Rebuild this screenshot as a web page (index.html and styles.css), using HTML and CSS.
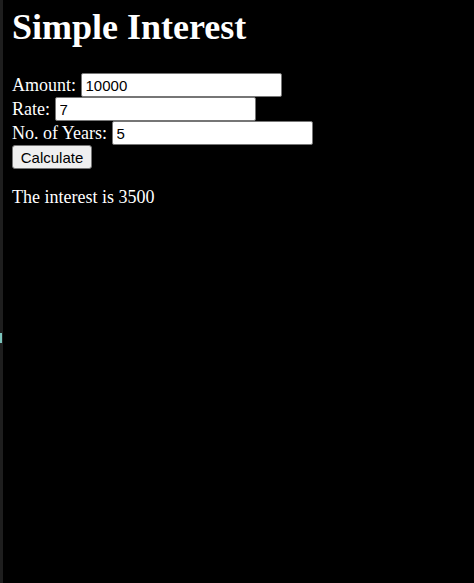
FILE: index.html
```html
<!DOCTYPE html>
<html>
<head>
<meta charset="utf-8">
<title>Simple Interest</title>
<link rel="stylesheet" href="styles.css">
</head>
<body>
<div class="edge"><span class="edge-mark"></span></div>
<main class="page">
  <h1 class="title">Simple Interest</h1>
  <form class="form">
    <div class="row"><label class="label">Amount:</label> <input class="field" type="text" value="10000"></div>
    <div class="row"><label class="label">Rate:</label> <input class="field" type="text" value="7"></div>
    <div class="row"><label class="label">No. of Years:</label> <input class="field" type="text" value="5"></div>
    <div class="row"><button class="btn" type="button">Calculate</button></div>
  </form>
  <p class="result">The interest is 3500</p>
</main>
</body>
</html>
```
FILE: styles.css
```css
html, body {
  margin: 0;
  padding: 0;
  background: #000;
  height: 100%;
}
body {
  display: flex;
  color: #fff;
  font-family: "Liberation Serif", "Times New Roman", serif;
  font-size: 18px;
}
.edge {
  width: 3px;
  flex: none;
  background: #1e1e1e;
  position: relative;
}
.edge-mark {
  position: absolute;
  left: 0;
  top: 333px;
  width: 2px;
  height: 10px;
  background: #7cc4bc;
}
.page {
  padding: 7px 9px 0 9px;
}
.title {
  font-size: 36px;
  font-weight: bold;
  margin: 0 0 25px 0;
  line-height: 41px;
}
.form {
  margin: 0;
}
.row {
  height: 24px;
  line-height: 24px;
  white-space: nowrap;
}
.label {
  font-size: 18px;
}
.field {
  box-sizing: border-box;
  width: 201px;
  height: 24px;
  border: 1px solid #767676;
  border-radius: 2px;
  padding: 0 4px;
  font-family: "Liberation Sans", Arial, sans-serif;
  font-size: 15px;
  color: #000;
  background: #fff;
  vertical-align: top;
  margin: 0;
}
.btn {
  box-sizing: border-box;
  width: 80px;
  height: 24px;
  border: 1px solid #767676;
  border-radius: 3px;
  background: #efefef;
  font-family: "Liberation Sans", Arial, sans-serif;
  font-size: 15px;
  color: #000;
  padding: 0;
  margin: 0;
  vertical-align: top;
}
.result {
  margin: 18px 0 0 0;
  line-height: 21px;
}
```
